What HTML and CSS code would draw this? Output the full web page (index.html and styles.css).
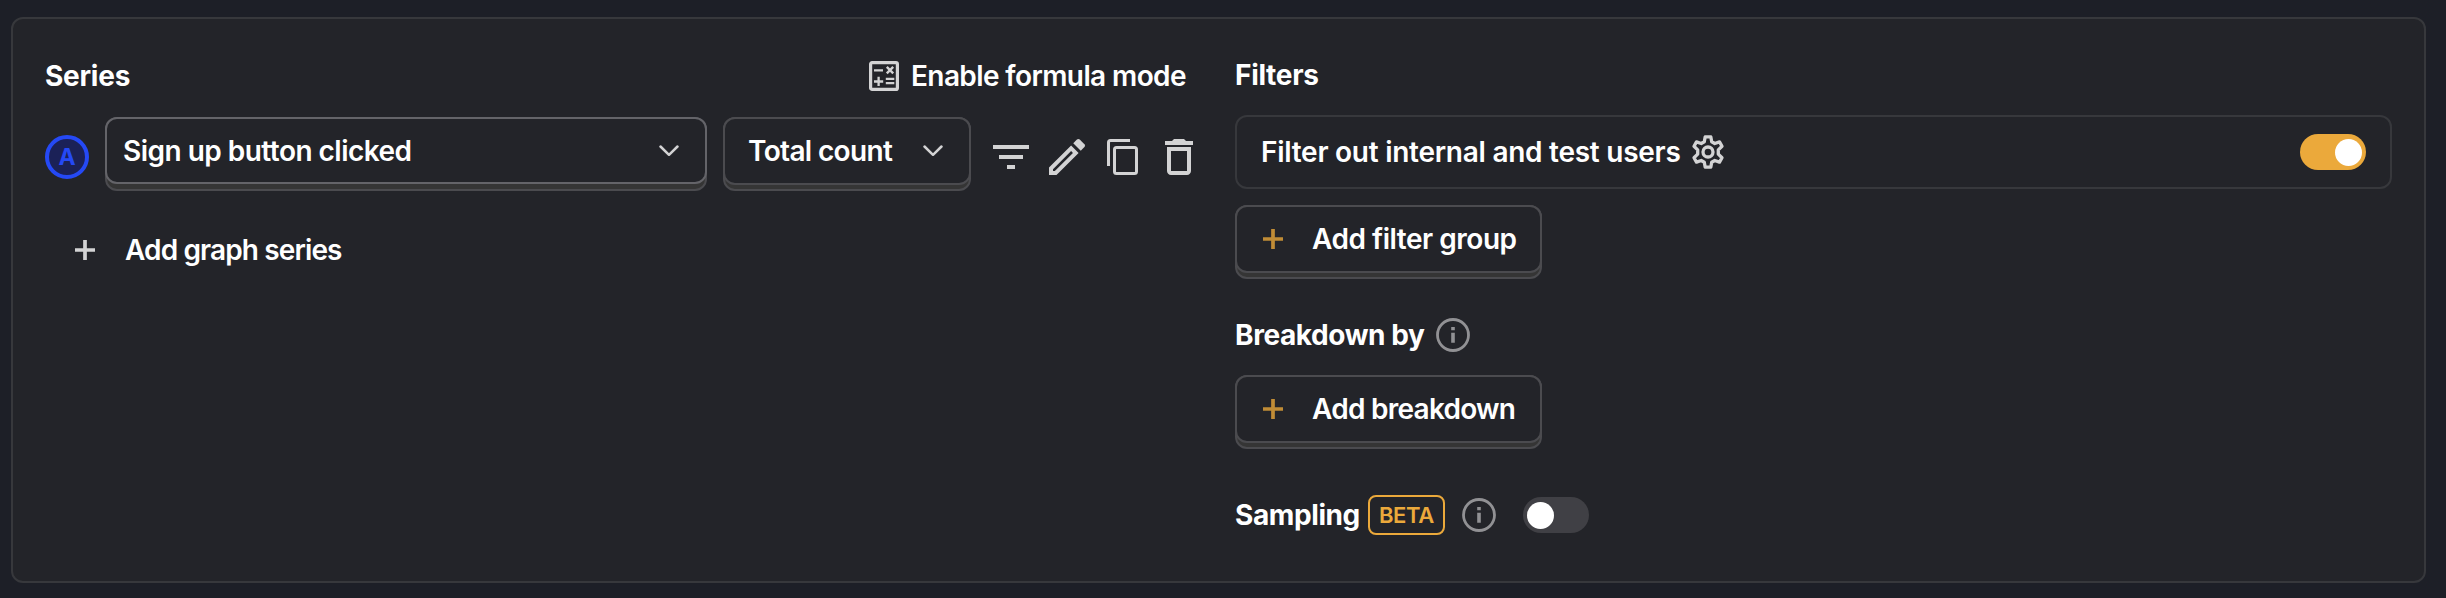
FILE: index.html
```
<!DOCTYPE html>
<html lang="en">
<head>
<meta charset="utf-8">
<title>Insight editor</title>
<link rel="stylesheet" href="styles.css">
</head>
<body>
<main class="panel">
  <section class="column series">
    <header class="series-header">
      <h2 class="title title-series">Series</h2>
      <button class="formula">
        <svg class="icon-formula" viewBox="0 0 30 30" fill="none" stroke="currentColor"><rect x="1.6" y="1.6" width="26.8" height="26.8" rx="1.5" stroke-width="3.2"/><path d="M5 9.3h9M16.8 17.9h8.5M16.8 22.2h8.5M5 20.5h9.2M9.6 15.8v9.2" stroke-width="2.3"/><path d="M17.8 5.8l6.4 6.6M24.2 5.8l-6.4 6.6" stroke-width="2.4"/></svg>
        <span class="t-enable">Enable formula mode</span>
      </button>
    </header>
    <div class="series-row">
      <span class="badge">A</span>
      <button class="control event"><span class="face"><span class="t-event">Sign up button clicked</span><svg class="chevron" viewBox="0 0 20 12"><path d="M1.5 1.5L10 9.8l8.5-8.3" fill="none" stroke="currentColor" stroke-width="2.5" stroke-linecap="round" stroke-linejoin="round"/></svg></span></button>
      <button class="control math"><span class="face"><span class="t-math">Total count</span><svg class="chevron" viewBox="0 0 20 12"><path d="M1.5 1.5L10 9.8l8.5-8.3" fill="none" stroke="currentColor" stroke-width="2.5" stroke-linecap="round" stroke-linejoin="round"/></svg></span></button>
      <div class="actions">
        <svg viewBox="0 0 24 24" fill="currentColor"><path d="M3 6h18v2H3zM6 11h12v2H6zM10 16h4v2h-4z"/></svg>
        <svg viewBox="0 0 24 24" fill="currentColor"><path fill-rule="evenodd" d="M3 17.25V21h3.75L17.81 9.94l-3.75-3.75L3 17.25zM5.92 19H5v-.92l9.06-9.06.92.92L5.92 19z"/><path d="M20.71 7.04a1 1 0 0 0 0-1.41l-2.34-2.34a1 1 0 0 0-1.41 0L15.13 5.12l3.75 3.75z"/></svg>
        <svg viewBox="0 0 48 48" fill="none" stroke="currentColor"><path d="M9.5 33V9.5Q9.5 7.5 11.5 7.5H31" stroke-width="3"/><rect x="15.5" y="14.5" width="22" height="26" rx="2" stroke-width="3"/></svg>
        <svg viewBox="0 0 24 24" fill="currentColor"><path fill-rule="evenodd" d="M6 19c0 1.1.9 2 2 2h8c1.1 0 2-.9 2-2V7H6zM8 9h8v10H8z"/><path d="M15.5 4l-1-1h-5l-1 1H5v2h14V4z"/></svg>
      </div>
    </div>
    <button class="add-series"><svg class="plus" viewBox="0 0 20 20"><path d="M10 0v20M0 10h20" stroke="currentColor" stroke-width="3.7"/></svg><span class="t-series">Add graph series</span></button>
  </section>
  <section class="column filters">
    <h2 class="title title-filters">Filters</h2>
    <div class="internal">
      <span class="t-internal">Filter out internal and test users</span>
      <svg class="gear" viewBox="0 0 34 34" fill="none" stroke="currentColor" stroke-width="3.3" stroke-linejoin="round"><path d="M14.2 1.8h5.6l.9 4.9 3.1 1.8 4.7-1.6 2.5 4.4-3.7 3.6v4.2l3.7 3.6-2.5 4.4-4.7-1.6-3.1 1.8-.9 4.9h-5.600l-.9-4.900-3.100-1.800-4.700 1.600-2.500-4.400 3.700-3.600v-4.200l-3.700-3.600 2.500-4.400 4.700 1.600 3.100-1.800z"/><circle cx="17" cy="17" r="5"/></svg>
      <span class="toggle toggle-on"><span class="knob"></span></span>
    </div>
    <button class="control add add-filter"><span class="face"><svg class="plus" viewBox="0 0 20 20"><path d="M10 0v20M0 10h20" stroke="currentColor" stroke-width="3.7"/></svg><span class="t-group">Add filter group</span></span></button>
    <div class="heading breakdown"><h2 class="title title-breakdown">Breakdown by</h2><svg class="info" viewBox="0 0 34 34"><circle cx="17" cy="17" r="15.5" fill="none" stroke="currentColor" stroke-width="2.8"/><path d="M17 9v3.2M17 14.8v10" stroke="currentColor" stroke-width="3.6"/></svg></div>
    <button class="control add"><span class="face"><svg class="plus" viewBox="0 0 20 20"><path d="M10 0v20M0 10h20" stroke="currentColor" stroke-width="3.7"/></svg><span class="t-breakdown">Add breakdown</span></span></button>
    <div class="heading sampling"><h2 class="title title-sampling">Sampling</h2><span class="beta">BETA</span><svg class="info" viewBox="0 0 34 34"><circle cx="17" cy="17" r="15.5" fill="none" stroke="currentColor" stroke-width="2.8"/><path d="M17 9v3.2M17 14.8v10" stroke="currentColor" stroke-width="3.6"/></svg><span class="toggle"><span class="knob"></span></span></div>
  </section>
</main>
</body>
</html>
```
FILE: styles.css
```
* { box-sizing: border-box; }
body {
  margin: 0;
  height: 598px;
  padding: 17px 20px 15px 11px;
  background: #1d1f27;
  color: #fff;
  font: 600 28px/34px Inter, sans-serif;
  white-space: nowrap;
}
button { border: 0; padding: 0; background: none; color: inherit; font: inherit; text-align: left; }
svg { display: block; flex: none; }
.panel {
  display: grid;
  grid-template-columns: 1158px 1157px;
  column-gap: 32px;
  height: 566px;
  padding: 0 32px;
  border: 2px solid #37383c;
  border-radius: 12px;
  background: #232429;
}
.column { display: flex; flex-direction: column; align-items: flex-start; }
.title { margin: 0; font-size: 28px; font-weight: 700; line-height: 34px; }

.series-header { display: flex; justify-content: space-between; width: 1142px; padding-top: 40px; }
.formula { display: flex; align-items: center; gap: 12px; width: 318px; height: 34px; }
.icon-formula { width: 30px; height: 30px; color: #d3d3d4; }
.series-row { display: flex; align-items: flex-start; margin-top: 24px; }
.badge {
  display: flex; align-items: center; justify-content: center;
  width: 44px; height: 44px; margin: 18px 16px 0 0;
  border: 4px solid #2549f5; border-radius: 50%;
  background: #1b2157; color: #2549f5;
  font-size: 23px; font-weight: 700; line-height: 36px;
}
.control {
  display: flex; align-items: flex-start; height: 74px;
  border: 2px solid #4b4b4f; border-radius: 12px;
  background: #353535;
}
.face {
  flex: 1; display: flex; align-items: center;
  height: 68px; margin: -2px;
  border: 2px solid #4b4b4f; border-radius: 12px;
  background: #232429;
}
.event { width: 602px; margin-right: 16px; }
.event .face { height: 67px; padding: 0 26px 0 16px; justify-content: space-between; border-color: #646469; }
.math { width: 248px; }
.math .face { padding: 0 26px 0 23px; justify-content: space-between; }
.chevron { width: 20px; height: 12px; color: #d3d3d4; }
.actions { display: flex; gap: 8px; margin: 16px 0 0 16px; color: #d3d3d4; }
.actions svg { width: 48px; height: 48px; }
.plus { width: 20px; height: 20px; }
.add-series { display: flex; align-items: center; gap: 30px; height: 34px; margin: 42px 0 0 30px; }
.add-series .plus { color: #d3d3d4; }

.filters { padding-top: 39px; }
.internal {
  display: flex; align-items: center;
  width: 1157px; height: 74px; margin-top: 23px; padding: 0 24px;
  border: 2px solid #37383c; border-radius: 12px;
}
.gear { width: 34px; height: 34px; margin-left: 10px; color: #d3d3d4; }
.toggle { display: flex; align-items: center; width: 66px; height: 36px; padding: 0 4px; border-radius: 18px; background: #404045; }
.toggle-on { justify-content: flex-end; margin-left: auto; background: #eba93b; }
.knob { width: 27px; height: 27px; border-radius: 50%; background: #fff; }
.add { width: 307px; }
.add .face { padding-left: 26px; }
.add .plus { margin-right: 29px; color: #c08c36; }
.add-filter { margin-top: 16px; }
.heading { display: flex; align-items: center; height: 40px; }
.breakdown { margin: 36px 0 20px; }
.sampling { margin-top: 46px; }
.info { width: 34px; height: 34px; color: #919194; }
.breakdown .info { margin-left: 11px; }
.beta {
  display: flex; align-items: center; justify-content: center;
  width: 77px; height: 40px; margin: 0 17px 0 8px;
  border: 2px solid #eba93b; border-radius: 8px;
  color: #eba93b; font-size: 22px; font-weight: 600; letter-spacing: -0.4px;
}
.sampling .toggle { margin-left: 27px; }
.title-series { letter-spacing: -0.25px; }
.title-filters { letter-spacing: -0.3px; }
.title-breakdown { letter-spacing: -0.4px; }
.title-sampling { letter-spacing: -0.4px; }
.t-event { letter-spacing: -0.52px; }
.t-math { letter-spacing: -0.65px; }
.t-enable { letter-spacing: -0.6px; }
.t-series { letter-spacing: -0.88px; }
.t-internal { letter-spacing: -0.26px; }
.t-group { letter-spacing: -0.47px; }
.t-breakdown { letter-spacing: -0.74px; }
```
